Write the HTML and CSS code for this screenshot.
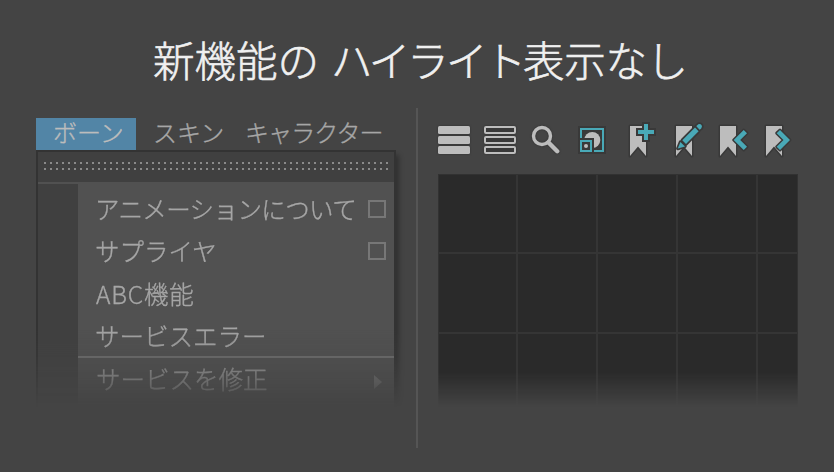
FILE: index.html
```html
<!DOCTYPE html>
<html lang="ja">
<head>
<meta charset="utf-8">
<title>新機能の ハイライト表示なし</title>
<link rel="stylesheet" href="styles.css">
</head>
<body>
<h1 class="title"><span class="t1">新機能の</span><span class="t2">ハイライト</span><span class="t3">表示なし</span></h1>
<main class="columns">
  <section class="left">
    <nav class="tabs">
      <span class="tab active">ボーン</span><span class="tab skin">スキン</span><span class="tab chara">キャラクター</span>
    </nav>
    <div class="menu-fade">
      <div class="menu">
        <div class="tearoff"><div class="dots"></div><div class="dots"></div></div>
        <div class="menu-body">
          <div class="gutter"></div>
          <ul class="items">
            <li><span class="label anim">アニメーションについて</span><i class="box"></i></li>
            <li><span class="label">サプライヤ</span><i class="box"></i></li>
            <li class="low"><span class="label abc">ABC機能</span></li>
            <li class="low"><span class="label">サービスエラー</span></li>
            <li class="sub"><span class="label">サービスを修正</span><i class="arrow"></i></li>
          </ul>
        </div>
      </div>
    </div>
  </section>
  <div class="divider"></div>
  <section class="right">
    <svg class="toolbar" width="364" height="48" viewBox="436 116 364 48">
      <g class="halo">
        <g fill="#bdbdbd"><rect x="438" y="126" width="32" height="8" rx="1.5"/><rect x="438" y="136" width="32" height="8" rx="1.5"/><rect x="438" y="146" width="32" height="8" rx="1.5"/></g>
        <g fill="#393939" stroke="#bdbdbd" stroke-width="2"><rect x="485" y="127" width="30" height="6" rx="1"/><rect x="485" y="137" width="30" height="6" rx="1"/><rect x="485" y="147" width="30" height="6" rx="1"/></g>
        <g fill="none" stroke="#bdbdbd"><circle cx="542" cy="136" r="8.5" stroke-width="3.4"/><path d="M548.5 142.5L557.2 151.2" stroke-width="4.4" stroke-linecap="round"/></g>
      </g>
      <rect x="578" y="126" width="28" height="28" fill="#393939"/>
      <circle cx="592.3" cy="140" r="8" fill="#bdbdbd"/>
      <rect x="578" y="138" width="16" height="16" fill="#393939"/>
      <path d="M581 138V129H603V151H594" fill="none" stroke="#49a9b7" stroke-width="2"/>
      <rect x="581" y="141" width="10" height="10" fill="#393939" stroke="#49a9b7" stroke-width="2"/>
      <circle cx="586" cy="146" r="2" fill="#bdbdbd"/>
      <g fill="#bdbdbd" stroke="#393939" stroke-width="3" stroke-linejoin="round" paint-order="stroke">
        <path d="M630 126H646V156L638 146.5L630 156Z"/>
        <path d="M676 126H692V156L684 146.5L676 156Z"/>
        <path d="M720 126H736V156L728 146.5L720 156Z"/>
        <path d="M766 126H782V156L774 146.5L766 156Z"/>
      </g>
      <path d="M644 124H648V130H654V134H648V140H644V134H638V130H644Z" fill="#49a9b7" stroke="#393939" stroke-width="4" paint-order="stroke"/>
      <g fill="#49a9b7" stroke="#393939" stroke-width="3.4" stroke-linejoin="round" paint-order="stroke">
        <path d="M696.1 126.2L698.3 124.2Q700.3 123.4 701.5 125.1Q702.6 126.5 701.2 128.5L699.3 130Z"/>
        <path d="M682.3 140.3L695 127.5L698.6 131.2L686 144.1Z"/>
        <path d="M680.4 142.1L685 146.4L677.8 148.6Z"/>
      </g>
      <g fill="#49a9b7" stroke="#393939" stroke-width="3" stroke-linejoin="round" paint-order="stroke">
        <path d="M743.7 130L747 133.2L740.2 140L747 146.8L743.7 150L733.7 140Z"/>
        <path d="M780 130L776.7 133.2L783.5 140L776.7 146.8L780 150L790 140Z"/>
      </g>
    </svg>
    <div class="canvas"></div>
  </section>
</main>
</body>
</html>
```

FILE: styles.css
```css
* { box-sizing: border-box; }
body {
  margin: 0;
  height: 472px;
  overflow: hidden;
  background: #444;
  color: #a6a6a6;
  font-family: "Noto Sans CJK JP", sans-serif;
  font-weight: 300;
  -webkit-text-stroke: .35px;
}
.title {
  display: flex;
  height: 108px;
  margin: 0;
  padding: 29px 0 0 153px;
  font-size: 41.5px;
  line-height: 60px;
  font-weight: 300;
  color: #f0f0f0;
  white-space: nowrap;
  -webkit-text-stroke: .6px;
}
.t1 { width: 178px; }
.t2 { width: 192px; letter-spacing: -2.9px; }
.t3 { letter-spacing: -.3px; }
.columns { display: flex; height: 364px; }
.left { flex: none; width: 416px; padding: 10px 0 0 36px; }
.tabs { display: flex; height: 32px; font-size: 24px; line-height: 28px; white-space: nowrap; }
.tab { flex: none; }
.tab.active { width: 100px; padding-left: 17px; background: #5285a6; color: #bcbcbc; }
.skin { width: 109px; padding-left: 17px; }
.chara { letter-spacing: -.9px; }
.menu-fade {
  width: 376px;
  height: 257px;
  overflow: hidden;
  -webkit-mask-image: linear-gradient(#000 178px, rgba(0,0,0,.78) 206px, rgba(0,0,0,.4) 233px, transparent 257px);
  mask-image: linear-gradient(#000 178px, rgba(0,0,0,.78) 206px, rgba(0,0,0,.4) 233px, transparent 257px);
}
.menu {
  width: 360px;
  height: 290px;
  border: 2px solid #333;
  background: #515151;
  box-shadow: 3px 5px 5px rgba(0,0,0,.3);
}
.tearoff {
  display: flex;
  flex-direction: column;
  gap: 4px;
  height: 30px;
  padding: 10px 0 0 6px;
  background: #404040;
}
.dots { width: 344px; height: 2px; background: repeating-linear-gradient(90deg, #8a8a8a 0 2px, transparent 2px 6px); }
.menu-body { display: flex; padding-top: 2px; height: 256px; }
.gutter { width: 40px; background: #404040; }
.items { flex: 1; margin: 0; padding: 4px 0 0; list-style: none; font-size: 24.5px; line-height: 42px; }
.items li { display: flex; align-items: center; justify-content: space-between; height: 42px; padding: 0 8px 0 17px; white-space: nowrap; }
.items .low { padding-top: 2px; }
.anim { letter-spacing: -.6px; }
.abc { padding-left: 1px; letter-spacing: .8px; }
.box { flex: none; width: 18px; height: 18px; border: 2px solid #777; }
.items .sub { height: 46px; padding: 0 12px 2px 18px; border-top: 2px solid #707070; }
.arrow { width: 0; height: 0; margin-top: 6px; border: solid transparent; border-width: 7px 0 7px 8px; border-left-color: #767676; }
.divider { flex: none; width: 2px; height: 340px; background: #555; }
.right { flex: none; padding-left: 18px; }
.toolbar { display: block; height: 48px; margin: 8px 0 10px; }
.halo { filter: drop-shadow(0 0 1.2px #303030); }
.canvas {
  width: 360px;
  height: 233px;
  margin-left: 2px;
  border: 1px solid #323232;
  border-bottom: 0;
  background:
    repeating-linear-gradient(90deg, transparent 0 77px, #353535 77px 79px, transparent 79px 80px),
    repeating-linear-gradient(#2a2a2a 0 77px, #353535 77px 79px, #2a2a2a 79px 80px);
  -webkit-mask-image: linear-gradient(#000 198px, transparent 233px);
  mask-image: linear-gradient(#000 198px, transparent 233px);
}
```
